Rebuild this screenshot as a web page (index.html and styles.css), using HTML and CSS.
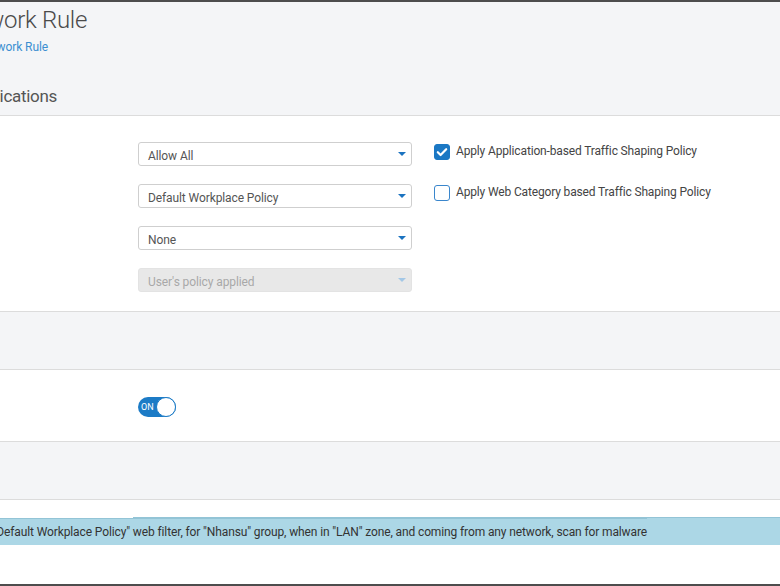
FILE: index.html
```html
<!DOCTYPE html>
<html lang="en">
<head>
<meta charset="utf-8">
<title>Network Rule</title>
<link rel="stylesheet" href="styles.css">
</head>
<body>
<div class="frame">
  <header class="page-head">
    <h1 class="title"><span>Add Network Rule</span></h1>
    <div class="crumb"><span>Firewall / Add Network Rule</span></div>
    <h2 class="section-title"><span>Web filtering and applications</span></h2>
  </header>

  <section class="panel panel-apps">
    <div class="selects">
      <div class="select"><span class="select-text">Allow All</span><span class="caret"></span></div>
      <div class="select"><span class="select-text">Default Workplace Policy</span><span class="caret"></span></div>
      <div class="select"><span class="select-text">None</span><span class="caret"></span></div>
      <div class="select disabled"><span class="select-text">User's policy applied</span><span class="caret"></span></div>
    </div>
    <div class="checks">
      <label class="check-row">
        <span class="box checked">
          <svg viewBox="0 0 16 16" width="16" height="16"><path d="M3.8 8.2 L6.6 11 L12.2 5.2" fill="none" stroke="#fff" stroke-width="2.2" stroke-linecap="round" stroke-linejoin="round"/></svg>
        </span>
        <span class="check-label">Apply Application-based Traffic Shaping Policy</span>
      </label>
      <label class="check-row">
        <span class="box"></span>
        <span class="check-label">Apply Web Category based Traffic Shaping Policy</span>
      </label>
    </div>
  </section>

  <section class="band"></section>

  <section class="panel panel-toggle">
    <div class="toggle"><span class="toggle-text">ON</span><span class="knob"></span></div>
  </section>

  <section class="band"></section>

  <section class="summary-area">
    <div class="summary"><span>Allow access using "Default Workplace Policy" web filter, for "Nhansu" group, when in "LAN" zone, and coming from any network, scan for malware</span></div>
  </section>
</div>
</body>
</html>
```

FILE: styles.css
```css
* { box-sizing: border-box; }

html, body {
  margin: 0;
  padding: 0;
  background: #ffffff;
}

body {
  font-family: Roboto, "Noto Sans", "Liberation Sans", sans-serif;
  font-size: 12px;
  letter-spacing: -0.1px;
  color: #555;
  width: 780px;
  height: 586px;
  overflow: hidden;
}

.frame {
  height: 586px;
  border-top: 2px solid #4d4d4d;
  border-bottom: 2px solid #4d4d4d;
  display: flex;
  flex-direction: column;
}

/* header */
.page-head {
  height: 114px;
  flex: none;
  background: #f4f5f7;
  border-bottom: 1px solid #dcdcdc;
  padding-top: 4px;
}

.title, .crumb, .section-title {
  margin: 0;
  display: flex;
  justify-content: flex-end;
  white-space: nowrap;
}

.title span, .crumb span, .section-title span {
  flex: none;
}

.title {
  font-size: 24px;
  line-height: 28px;
  font-weight: 300;
  letter-spacing: -0.3px;
  color: #4a4a4a;
  width: 87px;
}

.crumb {
  margin-top: 5px;
  font-size: 12px;
  line-height: 16px;
  color: #3b8fd1;
  width: 48px;
}

.section-title {
  margin-top: 30px;
  font-size: 17px;
  line-height: 22px;
  font-weight: 400;
  letter-spacing: -0.3px;
  color: #555;
  width: 57px;
}

/* panels */
.panel {
  flex: none;
  background: #fff;
  border-bottom: 1px solid #dcdcdc;
}

.band {
  flex: none;
  height: 58px;
  background: #f4f5f7;
  border-bottom: 1px solid #dcdcdc;
}

.panel-apps {
  height: 196px;
  display: flex;
  padding: 26px 0 0 138px;
  gap: 22px;
}

.selects {
  width: 274px;
  display: flex;
  flex-direction: column;
  gap: 18px;
}

.select {
  height: 24px;
  border: 1px solid #cfcfcf;
  border-radius: 3px;
  background: #fff;
  display: flex;
  align-items: center;
  padding: 3px 5px 0 9px;
}

.select-text {
  flex: 1;
  line-height: 16px;
  color: #555;
  white-space: nowrap;
}

.caret {
  width: 0;
  height: 0;
  margin-top: -4px;
  border-left: 4px solid transparent;
  border-right: 4px solid transparent;
  border-top: 4px solid #1b73c0;
}

.select.disabled {
  background: #e8e8e8;
  border-color: #e3e3e3;
}

.select.disabled .select-text {
  color: #a8a8a8;
}

.select.disabled .caret {
  border-top-color: #a3c7e6;
}

.checks {
  display: flex;
  flex-direction: column;
  gap: 26px;
  padding-top: 2px;
}

.check-row {
  display: flex;
  align-items: center;
  gap: 6px;
  height: 15px;
}

.box {
  width: 16px;
  height: 16px;
  border: 1.5px solid #3a86cc;
  border-radius: 3px;
  background: #fff;
  display: flex;
  align-items: center;
  justify-content: center;
}

.box.checked {
  background: #1b78c4;
  border-color: #1b78c4;
}

.box svg {
  display: block;
  flex: none;
}

.check-label {
  color: #444;
  white-space: nowrap;
  line-height: 16px;
  margin-top: -1px;
  letter-spacing: -0.15px;
}

/* toggle */
.panel-toggle {
  height: 72px;
  padding: 27px 0 0 138px;
}

.toggle {
  width: 38px;
  height: 20px;
  border-radius: 10px;
  background: #1c7bc6;
  display: flex;
  align-items: center;
  justify-content: space-between;
  padding-left: 3px;
}

.toggle-text {
  color: #fff;
  font-size: 9px;
  line-height: 10px;
  font-weight: 400;
  letter-spacing: 0;
}

.knob {
  width: 20px;
  height: 20px;
  border-radius: 50%;
  background: #fff;
  border: 1.5px solid #1c7bc6;
}

/* summary */
.summary-area {
  flex: 1;
  background: #fff;
  padding-top: 18px;
  overflow: hidden;
}

.summary {
  height: 27px;
  background: #acd7e6;
  border-top: 1px solid #93c4d6;
  line-height: 26px;
  color: #333;
  white-space: nowrap;
  display: flex;
  justify-content: flex-end;
  width: 647px;
  letter-spacing: -0.12px;
  box-shadow: 133px 0 0 #acd7e6, 133px -1px 0 #93c4d6;
}

.summary span {
  flex: none;
}
```
